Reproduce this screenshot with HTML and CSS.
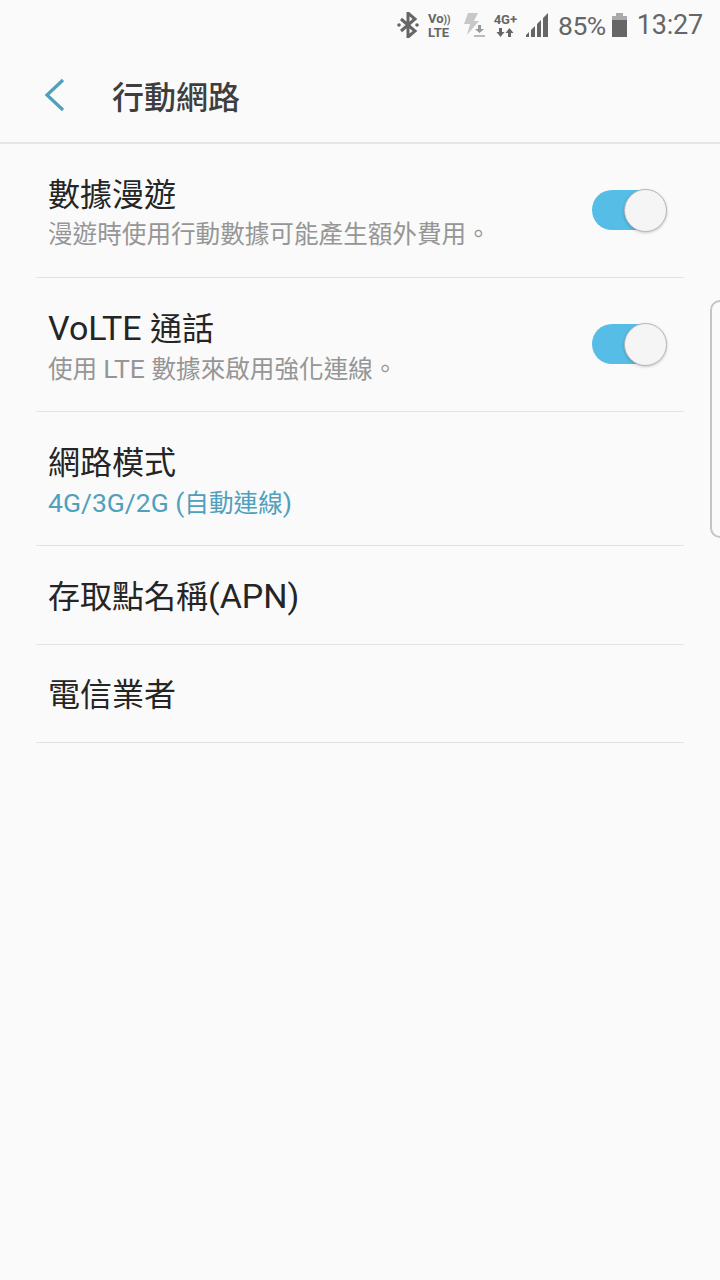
FILE: index.html
```html
<!DOCTYPE html>
<html lang="zh-Hant">
<head>
    <meta charset="UTF-8">
    <meta name="viewport" content="width=device-width, initial-scale=1.0">
    <title>行動網路</title>
    <link rel="stylesheet" href="styles.css">
</head>
<body>
    <div class="statusBar">
        <svg class="icon" width="22" height="26" viewBox="0 0 22 26"><path d="M4 7l14 12-7 6V1l7 6L4 19" fill="none" stroke="#666" stroke-width="3"/><circle cx="2" cy="13" r="1.800" fill="#666"/><circle cx="20" cy="13" r="1.800" fill="#666"/></svg>
        <div class="volte"><span>Vo<i>))</i></span><span>LTE</span></div>
        <svg class="icon flash" width="24" height="26" viewBox="0 0 24 26"><path d="M6 1h10l-4 8h5L5 23l3-11H2z" fill="#c8c8c8"/><path d="M16 13h3v4h3l-4.500 4-4.500-4h3z" fill="#999"/><rect x="12" y="23" width="11" height="2" fill="#bbb"/></svg>
        <div class="netType">
            <span>4G+</span>
            <svg width="18" height="9" viewBox="0 0 18 9"><path d="M3 0h3v4h2.500L4.500 9 .5 4H3zM12 9h3V5h2.500L13.500 0l-4 5H12z" fill="#666"/></svg>
        </div>
        <svg class="icon signal" width="24" height="26" viewBox="0 0 24 26"><path d="M1 25v-2l3-3v5zM6 25v-7l4-4v11zM12 25V12l4-4v17zM18 25V6l5-5v24z" fill="#666"/></svg>
        <span class="percent">85%</span>
        <svg class="icon battery" width="16" height="24" viewBox="0 0 16 24"><path d="M4 0h7v3H4z" fill="#aaa"/><path d="M0 3h15v5H0z" fill="#aaa"/><path d="M0 7h15v17H0z" fill="#666"/></svg>
        <span class="clock">13:27</span>
    </div>

    <header class="appBar">
        <svg class="backIcon" width="22" height="34" viewBox="0 0 22 34"><path d="M19 2L3 17l16 15" fill="none" stroke="#4fa0ba" stroke-width="3.200"/></svg>
        <h1>行動網路</h1>
    </header>

    <section class="settingsList">
        <div class="row twoLine">
            <div class="rowText">
                <div class="rowTitle">數據漫遊</div>
                <div class="rowSub">漫遊時使用行動數據可能產生額外費用。</div>
            </div>
            <div class="toggle"><div class="knob"></div></div>
        </div>
        <div class="row twoLine">
            <div class="rowText">
                <div class="rowTitle"><span class="latin">VoLTE </span>通話</div>
                <div class="rowSub">使用 <span class="latin">LTE </span>數據來啟用強化連線。</div>
            </div>
            <div class="toggle"><div class="knob"></div></div>
        </div>
        <div class="row twoLine">
            <div class="rowText">
                <div class="rowTitle">網路模式</div>
                <div class="rowSub accent"><span class="latin">4G/3G/2G (</span>自動連線<span class="latin">)</span></div>
            </div>
        </div>
        <div class="row oneLine">
            <div class="rowTitle">存取點名稱<span class="latin">(APN)</span></div>
        </div>
        <div class="row oneLine lastRow">
            <div class="rowTitle">電信業者</div>
        </div>
    </section>

    <div class="edgeHandle"></div>
</body>
</html>
```

FILE: styles.css
```css
* {
    box-sizing: border-box;
    font-family: Roboto, "Noto Sans CJK TC", sans-serif;
}
html, body {
    margin: 0;
    height: 100%;
}
body {
    background: #fafafa;
    position: relative;
    overflow: hidden;
}
.statusBar {
    height: 50px;
    display: flex;
    justify-content: flex-end;
    align-items: center;
    padding-right: 17px;
    color: #666;
}
.icon {
    display: block;
    flex: none;
}
.volte {
    margin-left: 9px;
    display: flex;
    flex-direction: column;
    font-size: 13px;
    font-weight: 700;
    line-height: 13px;
}
.volte i {
    font-style: normal;
    font-size: 10px;
}
.flash {
    margin-left: 11px;
}
.netType {
    margin-left: 8px;
    display: flex;
    flex-direction: column;
    align-items: center;
    gap: 2px;
    font-size: 13px;
    font-weight: 700;
    line-height: 13px;
}
.netType svg {
    display: block;
}
.signal {
    margin-left: 8px;
}
.percent {
    margin-left: 9px;
    font-size: 26.5px;
    letter-spacing: -0.5px;
}
.battery {
    margin-left: 6px;
}
.clock {
    margin-left: 9px;
    font-size: 27px;
    letter-spacing: -0.2px;
}
.appBar {
    height: 94px;
    display: flex;
    align-items: center;
    padding: 0 0 2px 44px;
    border-bottom: 2px solid #e6e6e6;
}
.backIcon {
    flex: none;
}
.appBar h1 {
    margin: 0 0 0 46px;
    font-size: 32px;
    font-weight: 500;
    color: #3e3e3e;
}
.settingsList {
    padding: 0 36px;
}
.row {
    display: flex;
    align-items: center;
    justify-content: space-between;
    padding: 0 22px 0 12px;
    border-bottom: 1px solid #e2e2e2;
}
.twoLine {
    height: 134px;
}
.oneLine {
    height: 99px;
    padding-top: 2px;
}
.lastRow {
    height: 98px;
}
.rowText {
    padding-top: 5px;
}
.rowTitle {
    font-size: 32px;
    line-height: 40px;
    color: #252525;
}
.rowSub {
    font-size: 24.6px;
    line-height: 32px;
    color: #969696;
    margin-top: 4px;
}
.rowTitle .latin {
    font-size: 34px;
}
.rowSub .latin {
    font-size: 26.5px;
}
.accent {
    color: #4f9fbe;
}
.toggle {
    position: relative;
    width: 70px;
    height: 40px;
    margin-bottom: 1px;
    border-radius: 20px;
    background: #56bde6;
}
.knob {
    position: absolute;
    right: -5px;
    top: -1px;
    width: 43px;
    height: 43px;
    border-radius: 50%;
    background: #f5f5f5;
    border: 1px solid #b5b5b5;
    box-shadow: 0 1px 3px rgba(0, 0, 0, 0.2);
}
.edgeHandle {
    position: absolute;
    left: 710px;
    top: 300px;
    width: 20px;
    height: 238px;
    border: 2px solid #c4c4c4;
    border-radius: 14px;
}
```
